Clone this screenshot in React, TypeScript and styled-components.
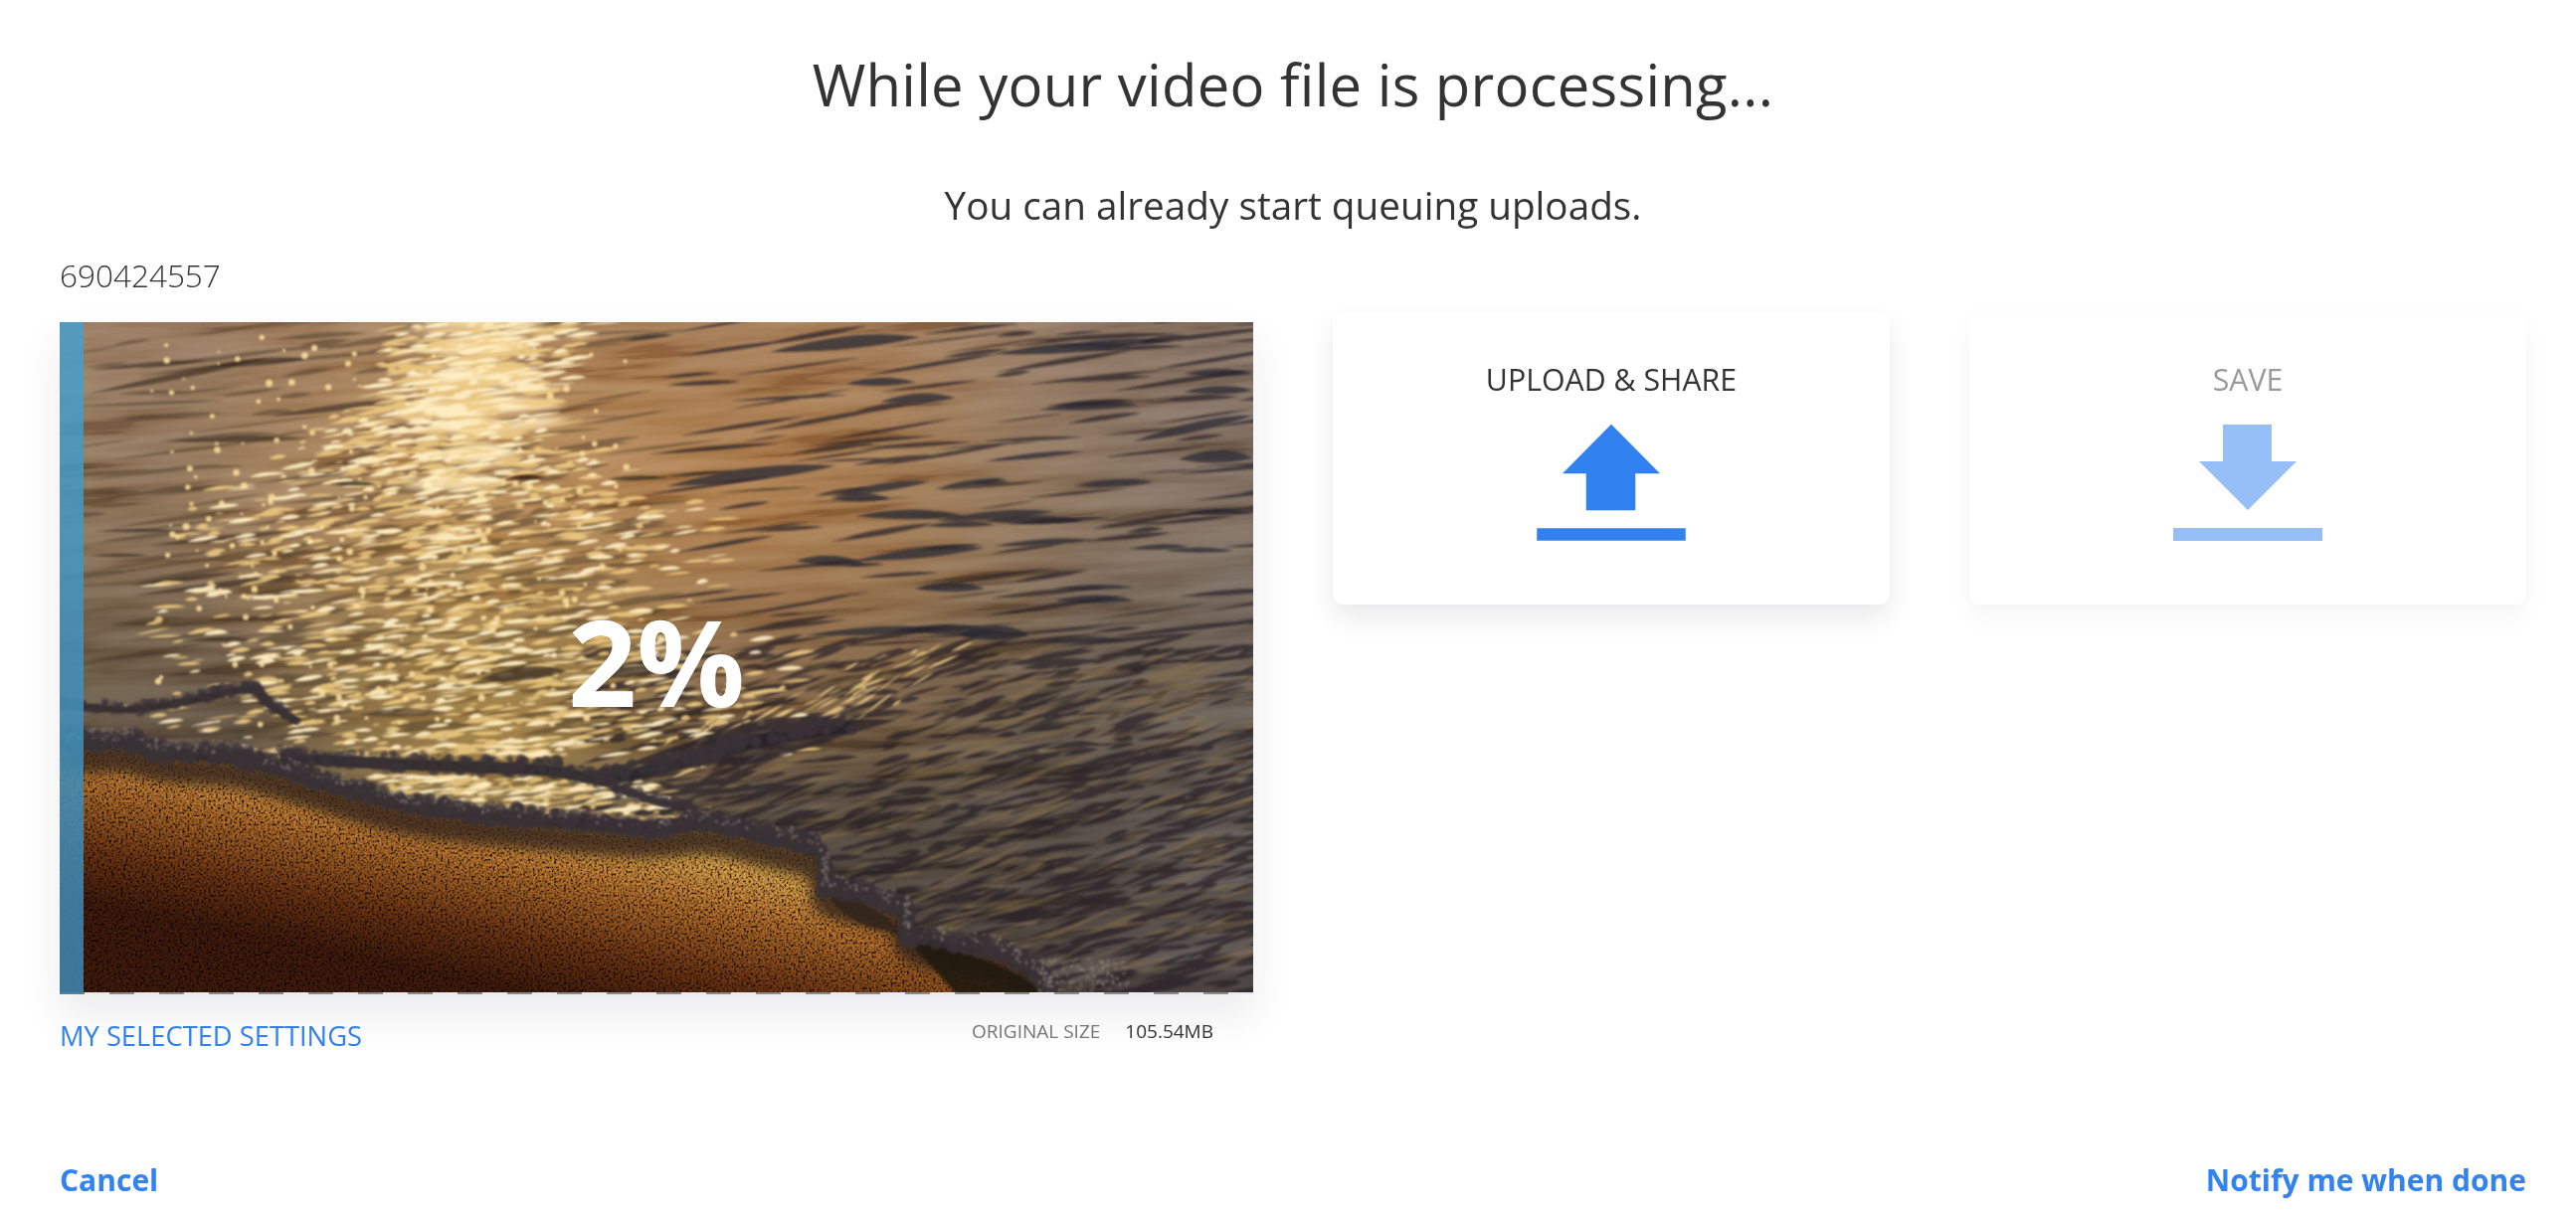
import React, { useMemo } from "react";
import styled, { createGlobalStyle } from "styled-components";

const Global = createGlobalStyle`
  html, body { margin: 0; padding: 0; background: #fff; }
  body { font-family: "Open Sans", "Noto Sans", sans-serif; color: #333; }
  * { box-sizing: border-box; }
`;

const Page = styled.div`
  width: 2590px;
  height: 1228px;
  padding: 0 50px 0 60px;
  display: flex;
  flex-direction: column;
  overflow: hidden;
`;
const Title = styled.h1`
  margin: 0;
  height: 172px;
  padding-top: 45px;
  line-height: 80px;
  font-size: 58px;
  font-weight: 400;
  letter-spacing: 0.26px;
  text-align: center;
  color: #333;
`;
const Subtitle = styled.p`
  margin: 0;
  height: 84px;
  line-height: 68px;
  font-size: 38.7px;
  font-weight: 400;
  text-align: center;
  color: #333;
`;
const FileId = styled.div`
  height: 68px;
  line-height: 42px;
  font-size: 31.5px;
  font-weight: 300;
  color: #333;
`;
const Main = styled.div`
  display: flex;
  align-items: flex-start;
  gap: 80px;
  height: 780px;
`;
const PreviewColumn = styled.div`
  width: 1200px;
  flex: none;
`;
const Preview = styled.div`
  position: relative;
  width: 1200px;
  height: 676px;
  background: repeating-linear-gradient(90deg, #8b8b8b 0 25px, #e9e9eb 25px 50px) 0 100% / 100% 2px no-repeat;
  box-shadow: 0 20px 40px rgba(30, 30, 60, 0.09);
`;
const PhotoSvg = styled.svg`
  display: block;
  width: 1200px;
  height: 674px;
`;
const Overlay = styled.rect`
  mix-blend-mode: overlay;
  opacity: 0.6;
`;
const SoftLight = styled.rect`
  mix-blend-mode: soft-light;
  opacity: 0.35;
`;
const Progress = styled.div<{ $pct: number }>`
  position: absolute;
  left: 0;
  top: 0;
  bottom: 0;
  width: ${(p) => p.$pct}%;
  background: linear-gradient(180deg, rgba(72, 160, 205, 0.84), rgba(62, 132, 172, 0.88));
`;
const Percent = styled.div`
  position: absolute;
  left: 0;
  right: 0;
  top: 280px;
  text-align: center;
  font-size: 121px;
  line-height: 120px;
  font-weight: 700;
  color: #fff;
`;
const PreviewFooter = styled.div`
  display: flex;
  justify-content: space-between;
  align-items: flex-start;
  padding-right: 40px;
`;
const SettingsLink = styled.a`
  margin-top: 22px;
  font-size: 27.3px;
  line-height: 40px;
  font-weight: 400;
  color: #3282f0;
`;
const SizeRow = styled.div`
  display: flex;
  gap: 25px;
  margin-top: 22px;
  font-size: 19px;
  line-height: 30px;
`;
const SizeLabel = styled.span`
  color: #777;
`;
const SizeValue = styled.span`
  color: #333;
`;
const Actions = styled.div`
  display: flex;
  gap: 80px;
  margin-top: -11px;
`;
const ActionCard = styled.div<{ $dim?: boolean }>`
  width: 560px;
  height: 295px;
  border-radius: 10px;
  background: #fff;
  display: flex;
  flex-direction: column;
  align-items: center;
  padding-top: 47px;
  box-shadow: 0 14px 26px ${(p) => (p.$dim ? "rgba(30,30,60,0.035)" : "rgba(30,30,60,0.09)")},
    0 0 8px rgba(30, 30, 60, 0.02);
`;
const ActionLabel = styled.div<{ $dim?: boolean }>`
  font-size: 30.3px;
  line-height: 44px;
  font-weight: 400;
  color: ${(p) => (p.$dim ? "#999" : "#333")};
  margin-bottom: 23px;
`;
const ActionIcon = styled.svg<{ $dim?: boolean }>`
  display: block;
  width: 150px;
  height: 117px;
  opacity: ${(p) => (p.$dim ? 0.5 : 1)};
`;
const Footer = styled.div`
  display: flex;
  justify-content: space-between;
  margin-top: 61px;
`;
const FooterLink = styled.a`
  font-size: 30px;
  line-height: 44px;
  font-weight: 700;
  color: #3282f0;
`;

type Pt = [number, number];

function rng(seed: number) {
  return () => {
    seed |= 0;
    seed = (seed + 0x6d2b79f5) | 0;
    let t = Math.imul(seed ^ (seed >>> 15), 1 | seed);
    t = (t + Math.imul(t ^ (t >>> 7), 61 | t)) ^ t;
    return ((t ^ (t >>> 14)) >>> 0) / 4294967296;
  };
}
const lens = (x: number, y: number, len: number, th: number, slope: number) => {
  const ex = x + len;
  const ey = y + slope * len;
  const mx = x + len * 0.55;
  const my = y + (slope * len) / 2;
  return `M${x.toFixed(1)} ${y.toFixed(1)}Q${mx.toFixed(1)} ${(my - th).toFixed(1)} ${ex.toFixed(1)} ${ey.toFixed(1)}Q${mx.toFixed(1)} ${(my + th * 0.5).toFixed(1)} ${x.toFixed(1)} ${y.toFixed(1)}Z`;
};
const shoreline: Pt[] = [
  [0, 424], [24, 425], [69, 423], [100, 435], [172, 437], [230, 453], [291, 472], [344, 487], [421, 497],
  [497, 503], [600, 512], [650, 503], [715, 520], [761, 530], [772, 553], [768, 570], [814, 580],
  [853, 593], [851, 620], [944, 633], [986, 660], [998, 676],
];
const upperPts: Pt[] = [[0, 385], [24, 387], [77, 391], [145, 378], [195, 366], [214, 388], [240, 402]];
const innerPts: Pt[] = [[222, 438], [306, 443], [421, 448], [497, 450], [543, 462], [600, 449], [657, 436], [696, 420], [799, 407]];
const inner2Pts: Pt[] = [[543, 462], [590, 480], [640, 492]];
const smooth = (pts: Pt[]) => {
  let d = `M${pts[0][0]} ${pts[0][1]}`;
  for (let i = 1; i < pts.length - 1; i++) {
    const mx = (pts[i][0] + pts[i + 1][0]) / 2;
    const my = (pts[i][1] + pts[i + 1][1]) / 2;
    d += `Q${pts[i][0]} ${pts[i][1]} ${mx} ${my}`;
  }
  const l = pts[pts.length - 1];
  return d + `L${l[0]} ${l[1]}`;
};
const sample = (pts: Pt[], t: number): Pt => {
  const f = t * (pts.length - 1);
  const i = Math.min(Math.floor(f), pts.length - 2);
  const k = f - i;
  return [pts[i][0] + (pts[i + 1][0] - pts[i][0]) * k, pts[i][1] + (pts[i + 1][1] - pts[i][1]) * k];
};
const shoreD = smooth(shoreline);
const sandD = shoreD + "L998 680L0 680Z";

const bigDark: [number, number, number, number, number][] = [
  [715, 30, 150, 17, -0.1], [940, 32, 140, 13, -0.06], [1000, 25, 120, 10, -0.05], [790, 62, 70, 11, -0.02], [1130, 52, 70, 10, 0.0],
  [825, 80, 75, 13, -0.05], [985, 88, 100, 11, -0.05], [1130, 70, 70, 10, -0.02], [1080, 120, 120, 13, -0.22], [1125, 138, 75, 17, -0.02],
  [610, 165, 170, 17, -0.12], [775, 175, 100, 11, -0.15], [930, 140, 100, 7, -0.1], [775, 178, 60, 11, -0.01], [880, 168, 70, 8, -0.15],
  [1020, 165, 80, 10, -0.05], [870, 205, 70, 8, -0.02], [1130, 192, 70, 8, 0], [880, 200, 120, 11, -0.08], [800, 195, 110, 13, 0], [930, 200, 100, 11, 0],
  [940, 225, 100, 8, -0.06], [1075, 228, 60, 7, -0.04], [800, 240, 130, 14, -0.1], [740, 240, 70, 14, 0.05], [1110, 230, 70, 7, 0],
  [860, 268, 70, 13, 0], [1000, 268, 80, 7, -0.02], [750, 315, 140, 11, -0.05], [840, 310, 110, 14, 0.02], [1000, 280, 80, 11, 0],
  [905, 315, 70, 20, 0], [980, 322, 90, 8, -0.03],
];
const leftDark: [number, number, number, number, number][] = [
  [30, 72, 180, 9, -0.2], [150, 45, 100, 10, -0.08], [30, 48, 120, 6, -0.08], [110, 120, 140, 8, -0.02], [210, 95, 150, 9, -0.12],
  [90, 225, 150, 7, -0.1], [70, 265, 110, 7, -0.12], [35, 210, 90, 5, 0], [150, 300, 110, 7, -0.02], [30, 235, 60, 5, 0],
  [75, 275, 190, 8, -0.12], [130, 320, 70, 7, 0],
];
const sunBlobs: [number, number, number, number, number][] = [
  [345, 4, 150, 12, 0], [362, 28, 118, 30, -0.03], [350, 62, 140, 28, -0.06], [335, 92, 175, 24, -0.05], [365, 108, 90, 22, -0.02],
  [372, 136, 92, 26, -0.03], [340, 165, 110, 20, -0.04], [420, 112, 95, 14, -0.15],
];

function Photo() {
  const art = useMemo(() => {
    const r = rng(77);
    const dark: string[] = [];
    const darkLow: string[] = [];
    const tan: string[] = [];
    const glitterA: string[] = [];
    const glitterB: string[] = [];
    const dots: { x: number; y: number; s: number }[] = [];
    const blot: { x: number; y: number; s: number; o: number }[] = [];
    const spec: { x: number; y: number; s: number }[] = [];
    const cx = (y: number) => (y < 100 ? 425 - y * 0.5 : y < 250 ? 375 - (y - 100) * 0.05 : 368 + (y - 250) * 0.25);
    const w = (y: number) => (y < 90 ? 70 : y < 200 ? 70 + (y - 90) * 1.0 : 180 + (y - 200) * 0.25);
    for (let i = 0; i < 300; i++) {
      const x = r() * 1240 - 40;
      const y = r() * 350;
      const len = 35 + r() * 120;
      (x > 560 ? darkLow : dark).push(lens(x, y, len, 1.5 + r() * 6, -0.04 - r() * 0.14));
    }
    for (let i = 0; i < 190; i++) {
      const y = 120 + r() * 300;
      const x = cx(y) + (r() - 0.5) * w(y) * 2;
      dark.push(lens(x, y, 18 + r() * 55, 3 + r() * 7, -0.08 - r() * 0.2));
    }
    for (let i = 0; i < 1050; i++) {
      const x = 500 + r() * 720;
      const y = 330 + r() * 350;
      const len = 16 + r() * 60;
      darkLow.push(lens(x, y, len, 2.5 + r() * 7, -0.05 - r() * 0.38));
    }
    for (let i = 0; i < 300; i++) {
      const x = 620 + r() * 590;
      const y = 340 + r() * 320;
      tan.push(lens(x, y, 20 + r() * 70, 2 + r() * 5, -0.1 - r() * 0.4));
    }
    for (let i = 0; i < 1900; i++) {
      const y = r() * 440;
      const u = r() + r() - 1;
      const x = cx(y) + u * w(y) * 1.6;
      const len = 7 + r() * (y < 120 ? 40 : 30);
      const th = 2 + r() * 5;
      const sl = -0.03 - r() * 0.16;
      (r() < 0.65 ? glitterA : glitterB).push(lens(x, y, len, th, sl));
    }
    for (let i = 0; i < 340; i++) {
      const x = 300 + r() * 300;
      const y = 455 + (x - 300) * 0.03 + r() * 38;
      (r() < 0.65 ? glitterA : glitterB).push(lens(x, y, 6 + r() * 24, 2 + r() * 4, -0.05 - r() * 0.1));
    }
    for (let i = 0; i < 70; i++) {
      const t = r();
      const x = 620 + t * 260 + (r() - 0.5) * 50;
      const y = 440 - t * 90 + (r() - 0.5) * 50;
      glitterA.push(lens(x, y, 8 + r() * 26, 2 + r() * 3, -0.35 - r() * 0.4));
    }
    for (let i = 0; i < 190; i++) {
      dots.push({ x: 90 + r() * 480, y: 15 + r() * 390, s: 1.2 + r() * 2.4 });
    }
    const foam = (pts: Pt[], n: number, rad: number, jit: number) => {
      for (let i = 0; i < n; i++) {
        const [x, y] = sample(pts, r());
        blot.push({ x: x + (r() - 0.5) * 4, y: y + (r() - 0.7) * jit, s: rad * (0.3 + r() * 0.9), o: 0.4 + r() * 0.45 });
      }
    };
    foam(shoreline, 1300, 6, 17);
    foam(upperPts, 160, 4, 10);
    foam(innerPts, 420, 5, 15);
    foam(inner2Pts, 70, 4, 9);
    for (let i = 0; i < 520; i++) {
      const [x, y] = sample(shoreline, r());
      spec.push({ x: x + (r() - 0.5) * 6, y: y - 3 - r() * 14, s: 0.5 + r() * 1.1 });
    }
    for (let i = 0; i < 170; i++) {
      spec.push({ x: 985 + r() * 90, y: 640 + r() * 36, s: 0.5 + r() * 1.1 });
    }
    return { dark, darkLow, tan, glitterA, glitterB, dots, blot, spec };
  }, []);

  return (
    <PhotoSvg viewBox="0 0 1200 674" preserveAspectRatio="none" aria-hidden>
      <defs>
        <linearGradient id="water" x1="0" y1="0" x2="0" y2="1">
          <stop offset="0" stopColor="#94755a" />
          <stop offset="0.3" stopColor="#876d52" />
          <stop offset="0.5" stopColor="#685642" />
          <stop offset="0.75" stopColor="#4c4136" />
          <stop offset="1" stopColor="#423831" />
        </linearGradient>
        <radialGradient id="orange" gradientUnits="userSpaceOnUse" cx="700" cy="170" r="360">
          <stop offset="0" stopColor="#c27e3c" stopOpacity="0.55" />
          <stop offset="1" stopColor="#c27e3c" stopOpacity="0" />
        </radialGradient>
        <radialGradient id="sun" gradientUnits="userSpaceOnUse" cx="400" cy="190" r="300">
          <stop offset="0" stopColor="#e0a055" stopOpacity="0.55" />
          <stop offset="1" stopColor="#e0a055" stopOpacity="0" />
        </radialGradient>
        <radialGradient id="lowGold" gradientUnits="userSpaceOnUse" cx="430" cy="400" r="250">
          <stop offset="0" stopColor="#a98849" stopOpacity="0.9" />
          <stop offset="1" stopColor="#a98849" stopOpacity="0" />
        </radialGradient>
        <linearGradient id="cool" gradientUnits="userSpaceOnUse" x1="850" y1="0" x2="1200" y2="0">
          <stop offset="0" stopColor="#5c5a60" stopOpacity="0" />
          <stop offset="1" stopColor="#5c5a60" stopOpacity="0.4" />
        </linearGradient>
        <linearGradient id="sand" gradientUnits="userSpaceOnUse" x1="500" y1="470" x2="460" y2="670">
          <stop offset="0" stopColor="#9c7238" />
          <stop offset="0.22" stopColor="#966930" />
          <stop offset="0.45" stopColor="#73461b" />
          <stop offset="0.75" stopColor="#47220c" />
          <stop offset="1" stopColor="#2a1107" />
        </linearGradient>
        <clipPath id="sandClip">
          <path d={sandD} />
        </clipPath>
        <filter id="b1" x="-5%" y="-5%" width="110%" height="110%">
          <feGaussianBlur stdDeviation="1.3" />
        </filter>
        <filter id="b08" x="-5%" y="-5%" width="110%" height="110%">
          <feGaussianBlur stdDeviation="0.8" />
        </filter>
        <filter id="b3" x="-10%" y="-10%" width="120%" height="120%">
          <feGaussianBlur stdDeviation="3" />
        </filter>
        <filter id="b6" x="-10%" y="-20%" width="120%" height="140%">
          <feGaussianBlur stdDeviation="6" />
        </filter>
        <filter id="waveGray" x="0" y="0" width="100%" height="100%">
          <feTurbulence type="fractalNoise" baseFrequency="0.006 0.06" numOctaves="4" seed="21" />
          <feColorMatrix values="2.2 0 0 0 -0.6  2.2 0 0 0 -0.6  2.2 0 0 0 -0.6  0 0 0 0 1" />
        </filter>
        <filter id="grain" x="0" y="0" width="100%" height="100%">
          <feTurbulence type="fractalNoise" baseFrequency="0.42" numOctaves="2" seed="4" />
          <feColorMatrix values="2.6 0 0 0 -0.8  2.6 0 0 0 -0.8  2.6 0 0 0 -0.8  0 0 0 0 1" />
        </filter>
      </defs>

      <rect width="1200" height="674" fill="url(#water)" />
      <rect width="1200" height="460" fill="url(#orange)" />
      <rect width="1200" height="674" fill="url(#sun)" />
      <rect width="1200" height="674" fill="url(#cool)" />
      <SoftLight width="1200" height="674" filter="url(#waveGray)" transform="rotate(-4 600 300) translate(-60 -60) scale(1.12)" />
      <rect width="1200" height="674" fill="url(#lowGold)" />

      <g filter="url(#b1)">
        <path d={art.dark.join("")} fill="#3f3024" fillOpacity="0.45" />
        {leftDark.map(([x, y, l, t, s], i) => (
          <path key={i} d={lens(x, y, l, t, s)} fill="#33261c" fillOpacity="0.6" />
        ))}
        {bigDark.map(([x, y, l, t, s], i) => (
          <path key={i} d={lens(x, y, l, t, s)} fill="#2a2a36" fillOpacity="0.78" />
        ))}
      </g>
      <g filter="url(#b08)">
        <path d={art.darkLow.join("")} fill="#201e26" fillOpacity="0.68" />
        <path d={art.tan.join("")} fill="#8f7449" fillOpacity="0.42" />
      </g>

      <g filter="url(#b3)">
        {sunBlobs.map(([x, y, l, t, s], i) => (
          <path key={i} d={lens(x, y, l, t, s)} fill="#ffe9bb" fillOpacity="0.95" />
        ))}
      </g>
      <g filter="url(#b08)">
        <path d={art.glitterA.join("")} fill="#eecb82" fillOpacity="0.88" />
        <path d={art.glitterB.join("")} fill="#fff0c4" fillOpacity="0.92" />
        {art.dots.map((d, i) => (
          <circle key={i} cx={d.x} cy={d.y} r={d.s} fill="#f8dc9a" fillOpacity="0.9" />
        ))}
      </g>

      <g filter="url(#b1)">
        <path d={lens(450, 157, 38, 6, -0.02)} fill="#3b2210" fillOpacity="0.85" />
        <path d={lens(270, 163, 50, 6, 0)} fill="#33261a" fillOpacity="0.8" />
        <path d={lens(550, 158, 60, 6, -0.02)} fill="#33261a" fillOpacity="0.7" />
        <path d={lens(420, 360, 90, 18, -0.1)} fill="#3a2d20" fillOpacity="0.75" />
        <path d={lens(540, 355, 70, 16, -0.05)} fill="#3a2d20" fillOpacity="0.75" />
        <path d={lens(300, 395, 90, 11, -0.02)} fill="#4a3a28" fillOpacity="0.65" />
        <path d="M570 445Q640 415 720 397L840 400L760 425L700 445Z" fill="#2e272a" fillOpacity="0.82" />
        <path d={smooth(upperPts)} fill="none" stroke="#2c2624" strokeWidth="7" strokeOpacity="0.85" />
        <path d={smooth(innerPts)} fill="none" stroke="#25212a" strokeWidth="11" strokeOpacity="0.9" />
        <path d={smooth(inner2Pts)} fill="none" stroke="#2c2629" strokeWidth="7" strokeOpacity="0.85" />
      </g>

      <g clipPath="url(#sandClip)">
        <rect width="1200" height="674" fill="url(#sand)" />
        <Overlay width="1200" height="674" filter="url(#grain)" />
        <g transform="translate(0 14)" filter="url(#b6)" fill="none">
          <path d={shoreD} stroke="#2f2218" strokeWidth="30" strokeOpacity="0.8" />
        </g>
        <path d="M785 575Q830 590 855 625L835 612Q800 610 775 580Z" fill="#2b211b" fillOpacity="0.75" filter="url(#b1)" />
        <path d="M860 622Q950 640 1000 680L905 680Q880 650 858 628Z" fill="#1d140f" fillOpacity="0.88" filter="url(#b1)" />
      </g>

      <path d={shoreD} fill="none" stroke="#2d272c" strokeWidth="12" strokeOpacity="0.9" filter="url(#b1)" transform="translate(0 -1)" />
      <g filter="url(#b1)">
        {art.blot.map((b, i) => (
          <circle key={i} cx={b.x} cy={b.y} r={b.s} fill="#3a3237" fillOpacity={b.o} />
        ))}
      </g>
      <g filter="url(#b08)">
        {art.spec.map((b, i) => (
          <circle key={i} cx={b.x} cy={b.y} r={b.s} fill="#988a84" fillOpacity="0.6" />
        ))}
      </g>
    </PhotoSvg>
  );
}

const BLUE = "#3181f1";

export default function App() {
  return (
    <Page>
      <Global />
      <Title>While your video file is processing...</Title>
      <Subtitle>You can already start queuing uploads.</Subtitle>
      <FileId>690424557</FileId>
      <Main>
        <PreviewColumn>
          <Preview>
            <Photo />
            <Progress $pct={2} />
            <Percent>2%</Percent>
          </Preview>
          <PreviewFooter>
            <SettingsLink>MY SELECTED SETTINGS</SettingsLink>
            <SizeRow>
              <SizeLabel>ORIGINAL SIZE</SizeLabel>
              <SizeValue>105.54MB</SizeValue>
            </SizeRow>
          </PreviewFooter>
        </PreviewColumn>
        <Actions>
          <ActionCard>
            <ActionLabel>UPLOAD &amp; SHARE</ActionLabel>
            <ActionIcon viewBox="0 0 150 117">
              <path d="M75 0L123.5 49H99V86H50V49H26.5Z" fill={BLUE} stroke={BLUE} strokeOpacity="0.5" />
              <rect x="0.5" y="104.5" width="149" height="12" fill={BLUE} stroke={BLUE} strokeOpacity="0.5" />
            </ActionIcon>
          </ActionCard>
          <ActionCard $dim>
            <ActionLabel $dim>SAVE</ActionLabel>
            <ActionIcon $dim viewBox="0 0 150 117">
              <path d="M50 0H99V37H124L75 86L26 37H50Z" fill={BLUE} />
              <rect x="0" y="104" width="150" height="13" fill={BLUE} />
            </ActionIcon>
          </ActionCard>
        </Actions>
      </Main>
      <Footer>
        <FooterLink>Cancel</FooterLink>
        <FooterLink>Notify me when done</FooterLink>
      </Footer>
    </Page>
  );
}
